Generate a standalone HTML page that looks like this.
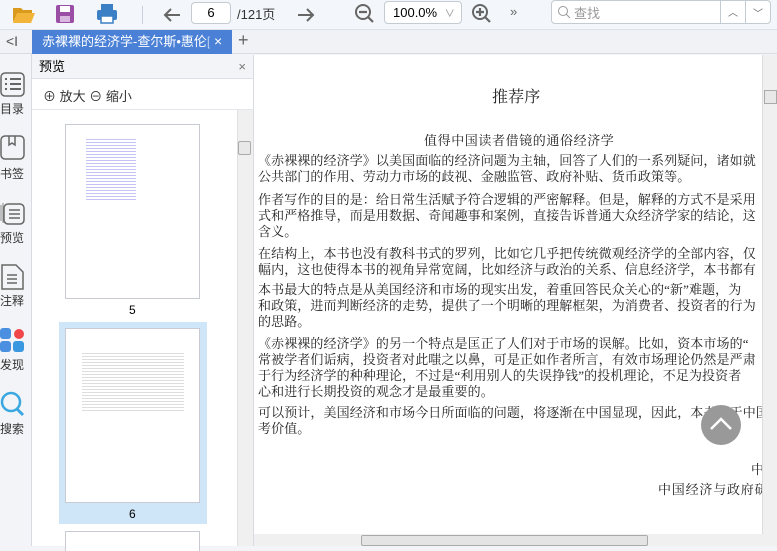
<!DOCTYPE html><html><head><meta charset="utf-8"><style>
*{margin:0;padding:0;box-sizing:border-box}
body{width:777px;height:546px;overflow:hidden;background:#f2f4f7;font-family:"Liberation Sans","Noto Sans CJK SC",sans-serif;position:relative}
.a{position:absolute}
.tb{left:0;top:0;width:777px;height:30px;background:#f3f6fa;border-bottom:1px solid #dde2e8}
.tabbar{left:0;top:30px;width:777px;height:24px;background:#f0f2f5;border-bottom:1px solid #d8dce2}
.tab{left:32px;top:30px;width:200px;height:24px;background:#4a80d6}
.tabt{left:42px;top:30px;width:168px;color:#fff;font-size:13px;line-height:24px;white-space:nowrap;overflow:hidden}
.side{left:0;top:54px;width:32px;height:492px;background:#f2f4f7;border-right:1px solid #d8dce2}
.side .l{position:absolute;left:0;font-size:12px;color:#333}
.pv{left:32px;top:55px;width:222px;height:491px;background:#fff;border-right:1px solid #d8dce2}
.doc{left:254px;top:55px;width:508px;height:479px;background:#fff;overflow:hidden}
.line{position:absolute;left:4px;white-space:nowrap;font-family:"Liberation Serif","Noto Serif CJK SC",serif;font-size:13px;letter-spacing:0.1px;color:#222;line-height:16px}
.thumb{position:absolute;background:#fff;border:1px solid #c8ccd2}
</style></head><body>
<div class="a tb"></div>
<svg class="a" style="left:12px;top:4px" width="24" height="20"><path d="M1 4h8l2 2h9v3H6L1 18z" fill="#d99a1e"/><path d="M5 9h18l-4 10H1z" fill="#f2b53a"/></svg>
<svg class="a" style="left:55px;top:4px" width="20" height="20"><rect x="1" y="1" width="18" height="18" rx="2" fill="#9b4ea6"/><rect x="5" y="2" width="10" height="6" fill="#fff"/><rect x="5" y="12" width="10" height="6" fill="#d9b8e0"/></svg>
<svg class="a" style="left:96px;top:3px" width="22" height="22"><rect x="5" y="1" width="12" height="6" fill="#3b7fc4"/><rect x="1" y="7" width="20" height="10" rx="2" fill="#3b7fc4"/><rect x="5" y="13" width="12" height="7" fill="#fff" stroke="#3b7fc4" stroke-width="1.5"/></svg>
<div class="a" style="left:142px;top:6px;width:1px;height:18px;background:#ccd"></div>
<svg class="a" style="left:162px;top:5px" width="20" height="20"><path d="M18 10H3M9 4l-6 6 6 6" stroke="#666" stroke-width="2" fill="none"/></svg>
<div class="a" style="left:191px;top:2px;width:40px;height:22px;border:1px solid #c5cbd3;border-radius:4px;background:#fff;text-align:center;font-size:13px;line-height:20px">6</div>
<div class="a" style="left:237px;top:4px;font-size:13px;color:#333">/121页</div>
<svg class="a" style="left:296px;top:5px" width="20" height="20"><path d="M2 10h15M11 4l6 6-6 6" stroke="#666" stroke-width="2" fill="none"/></svg>
<svg class="a" style="left:354px;top:3px" width="22" height="22"><circle cx="9" cy="9" r="7" stroke="#666" stroke-width="2" fill="none"/><path d="M5 9h8M14 14l5 5" stroke="#666" stroke-width="2.2"/></svg>
<div class="a" style="left:384px;top:1px;width:78px;height:23px;border:1px solid #c5cbd3;border-radius:4px;background:#fff;font-size:13px;line-height:21px;padding-left:8px">100.0% <span style="color:#888;font-size:10px;margin-left:4px">∨</span></div>
<svg class="a" style="left:471px;top:3px" width="22" height="22"><circle cx="9" cy="9" r="7" stroke="#666" stroke-width="2" fill="none"/><path d="M5 9h8M9 5v8M14 14l5 5" stroke="#666" stroke-width="2.2"/></svg>
<div class="a" style="left:510px;top:4px;font-size:13px;color:#666">»</div>
<div class="a" style="left:551px;top:0;width:220px;height:24px;border:1px solid #c5cbd3;border-radius:4px;background:#fff"></div>
<svg class="a" style="left:557px;top:5px" width="14" height="14"><circle cx="6" cy="6" r="4.5" stroke="#999" fill="none"/><path d="M9 9l4 4" stroke="#999"/></svg>
<div class="a" style="left:574px;top:3px;font-size:13px;color:#999">查找</div>
<div class="a" style="left:720px;top:0;width:1px;height:24px;background:#c5cbd3"></div>
<div class="a" style="left:745px;top:0;width:1px;height:24px;background:#c5cbd3"></div>
<div class="a" style="left:728px;top:4px;font-size:10px;color:#666">︿</div>
<div class="a" style="left:753px;top:5px;font-size:10px;color:#666">﹀</div>
<div class="a tabbar"></div>
<div class="a" style="left:6px;top:33px;font-size:14px;color:#555">&lt;I</div>
<div class="a tab"></div>
<div class="a tabt">赤裸裸的经济学-查尔斯•惠伦<span style="opacity:.6">[w</span></div>
<div class="a" style="left:214px;top:33px;color:#fff;font-size:14px">×</div>
<div class="a" style="left:238px;top:30px;color:#666;font-size:18px">+</div>
<div class="a side">
<svg style="position:absolute;left:0;top:18px" width="26" height="26"><rect x="1" y="1" width="23" height="23" rx="4" fill="none" stroke="#666" stroke-width="1.5"/><path d="M5 7h2M10 7h11M5 12h2M10 12h11M5 17h2M10 17h11" stroke="#666" stroke-width="2"/></svg>
<div class="l" style="top:46px">目录</div>
<svg style="position:absolute;left:0;top:81px" width="26" height="26"><rect x="1" y="1" width="23" height="23" rx="4" fill="none" stroke="#666" stroke-width="1.5"/><path d="M9 1v9l3-2 3 2V1" stroke="#666" stroke-width="1.5" fill="none"/></svg>
<div class="l" style="top:111px">书签</div>
<svg style="position:absolute;left:0;top:145px" width="30" height="30"><path d="M1 6v16M3 4v20" stroke="#888" stroke-width="1"/><rect x="4" y="5" width="20" height="20" rx="4" fill="#f2f4f7" stroke="#666" stroke-width="1.5"/><path d="M9 11h11M9 15h11M9 19h11" stroke="#666" stroke-width="1.5"/></svg>
<div class="l" style="top:175px">预览</div>
<svg style="position:absolute;left:0;top:210px" width="26" height="28"><path d="M2 1h14l7 7v17H2z" fill="none" stroke="#666" stroke-width="1.5"/><path d="M7 11h10M7 15h10M7 19h10" stroke="#666" stroke-width="1.5"/></svg>
<div class="l" style="top:238px">注释</div>
<svg style="position:absolute;left:0;top:274px" width="26" height="26"><rect x="0" y="0" width="11" height="11" rx="3" fill="#4a8fe0"/><circle cx="19" cy="6" r="5" fill="#f0464a"/><rect x="0" y="13" width="11" height="11" rx="3" fill="#4a8fe0"/><rect x="13" y="13" width="11" height="11" rx="3" fill="#3a98e0"/></svg>
<div class="l" style="top:302px">发现</div>
<svg style="position:absolute;left:0;top:337px" width="26" height="28"><circle cx="11" cy="11" r="9" fill="none" stroke="#3aa7e0" stroke-width="2.5"/><path d="M17 18l6 6" stroke="#3aa7e0" stroke-width="3"/></svg>
<div class="l" style="top:366px">搜索</div>
</div>
<div class="a pv">
<div style="height:24px;background:#f2f4f7;border-bottom:1px solid #dde;font-size:13px;line-height:24px;padding-left:7px">预览<span style="position:absolute;right:7px;color:#777">×</span></div>
<div style="position:absolute;top:31px;left:11px;font-size:13px;color:#333">⊕ 放大 ⊖ 缩小</div>
<div style="position:absolute;top:54px;left:0;width:222px;height:1px;background:#e3e6ea"></div>
<div style="position:absolute;left:205px;top:55px;width:16px;height:436px;background:#f0f0f0;border-left:1px solid #e0e0e0"></div>
<div style="position:absolute;left:206px;top:86px;width:13px;height:14px;background:#e8e8e8;border:1px solid #aaa;border-radius:2px"></div>
<div class="thumb" style="left:33px;top:69px;width:135px;height:175px">
<div style="margin:13px 0 0 20px;width:50px;height:62px;background:repeating-linear-gradient(#fff 0,#fff 1px,#c4c4f4 1px,#c4c4f4 2px,#fff 2px,#fff 3px)"></div></div>
<div style="position:absolute;left:97px;top:248px;font-size:12px">5</div>
<div style="position:absolute;left:27px;top:267px;width:148px;height:202px;background:#cfe5f8"></div>
<div class="thumb" style="left:33px;top:273px;width:135px;height:175px">
<div style="margin:22px 0 0 16px;width:102px;height:60px;background:repeating-linear-gradient(#fff 0,#fff 2px,#ddd 2px,#ddd 3px)"></div></div>
<div style="position:absolute;left:97px;top:452px;font-size:12px">6</div>
<div class="thumb" style="left:33px;top:476px;width:135px;height:20px;border-bottom:none"></div>
</div>
<div class="a doc">
<div class="line" style="left:238px;top:35px;font-size:16px">推荐序</div>
<div class="line" style="left:170px;top:78px;letter-spacing:0.6px">值得中国读者借镜的通俗经济学</div>
<div class="line" style="top:98px">《赤裸裸的经济学》以美国面临的经济问题为主轴，回答了人们的一系列疑问，诸如就</div>
<div class="line" style="top:114px">公共部门的作用、劳动力市场的歧视、金融监管、政府补贴、货币政策等。</div>
<div class="line" style="top:137px">作者写作的目的是：给日常生活赋予符合逻辑的严密解释。但是，解释的方式不是采用</div>
<div class="line" style="top:153px">式和严格推导，而是用数据、奇闻趣事和案例，直接告诉普通大众经济学家的结论，这</div>
<div class="line" style="top:169px">含义。</div>
<div class="line" style="top:191px">在结构上，本书也没有教科书式的罗列，比如它几乎把传统微观经济学的全部内容，仅</div>
<div class="line" style="top:207px">幅内，这也使得本书的视角异常宽阔，比如经济与政治的关系、信息经济学，本书都有</div>
<div class="line" style="top:227px">本书最大的特点是从美国经济和市场的现实出发，着重回答民众关心的“新”难题，为</div>
<div class="line" style="top:243px">和政策，进而判断经济的走势，提供了一个明晰的理解框架，为消费者、投资者的行为</div>
<div class="line" style="top:259px">的思路。</div>
<div class="line" style="top:281px">《赤裸裸的经济学》的另一个特点是匡正了人们对于市场的误解。比如，资本市场的“</div>
<div class="line" style="top:297px">常被学者们诟病，投资者对此嗤之以鼻，可是正如作者所言，有效市场理论仍然是严肃</div>
<div class="line" style="top:313px">于行为经济学的种种理论，不过是“利用别人的失误挣钱”的投机理论，不足为投资者</div>
<div class="line" style="top:329px">心和进行长期投资的观念才是最重要的。</div>
<div class="line" style="top:350px">可以预计，美国经济和市场今日所面临的问题，将逐渐在中国显现，因此，本书对于中国</div>
<div class="line" style="top:366px">考价值。</div>
<div class="line" style="left:497px;top:407px">中</div>
<div class="line" style="left:404px;top:427px;letter-spacing:0.8px">中国经济与政府研</div>
</div>
<div class="a" style="left:701px;top:405px;width:40px;height:40px;border-radius:50%;background:#999"></div>
<svg class="a" style="left:701px;top:405px" width="40" height="40"><path d="M10 24l10-10 10 10" stroke="#fff" stroke-width="2.5" fill="none"/></svg>
<div class="a" style="left:762px;top:55px;width:15px;height:479px;background:#f0f0f0;border-left:1px solid #ddd"></div>
<div class="a" style="left:764px;top:90px;width:13px;height:14px;background:#e8e8e8;border:1px solid #aaa"></div>
<div class="a" style="left:254px;top:534px;width:523px;height:12px;background:#f0f0f0"></div>
<div class="a" style="left:361px;top:535px;width:287px;height:11px;background:#e4e4e4;border:1px solid #aaa;border-radius:2px"></div>
</body></html>
